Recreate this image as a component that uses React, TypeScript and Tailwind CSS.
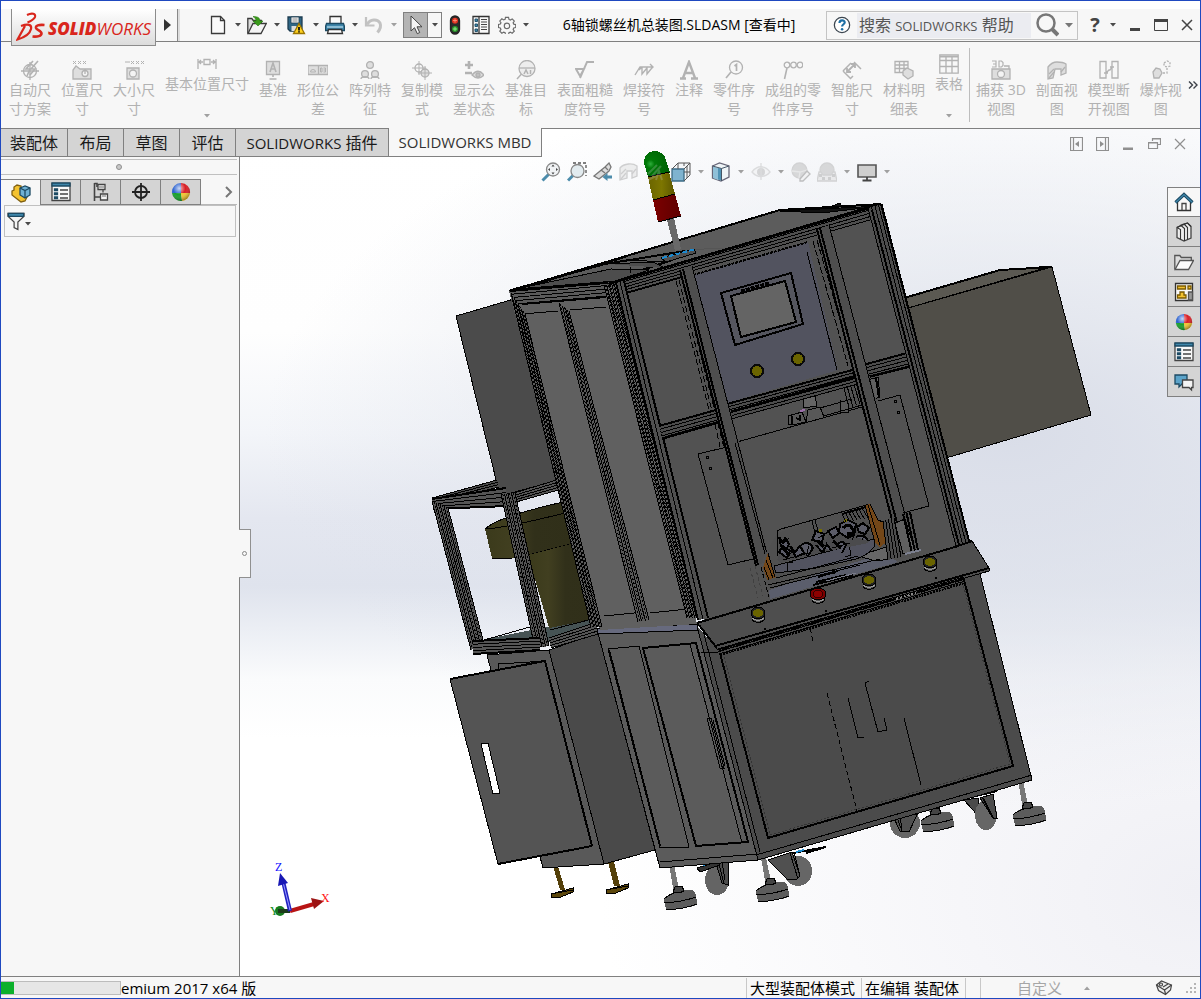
import React from "react";

type P = { children?: React.ReactNode };

/* ---------- small shared pieces ---------- */

const Caret = ({ light = false }: { light?: boolean }) => (
  <svg width="6" height="4" viewBox="0 0 6 4" className={light ? "text-[#a0a0a0]" : "text-[#4a4a4a]"}>
    <path d="M0 0h6L3 3.5z" fill="currentColor" />
  </svg>
);

const Ico = ({ children, size = 20 }: P & { size?: number }) => (
  <svg width={size} height={size} viewBox="0 0 20 20" fill="none" stroke="currentColor" strokeWidth="1.3" aria-hidden="true">
    {children}
  </svg>
);

/* ---------- quick access icons ---------- */

const NewIcon = () => (
  <Ico>
    <path d="M3.500 1.500h9l4 4v13h-13z" fill="#fafafa" stroke="#3a3a3a" />
    <path d="M12.500 1.500v4h4" stroke="#3a3a3a" />
  </Ico>
);
const OpenIcon = () => (
  <Ico>
    <path d="M.8 18.500v-15h4l1.500 2h8v3" fill="#ddd" stroke="#3a3a3a" />
    <path d="M1 18.500 6 8.500h13.300l-5.300 10z" fill="#f4f4f4" stroke="#3a3a3a" />
    <path d="M6 1.500c5 0 7 1.500 7 4.500h3l-5 5-5-5h3c0-2-1-3-3-4.500z" fill="#3a9a1c" stroke="#2a7a12" strokeWidth=".6" />
  </Ico>
);
const SaveIcon = () => (
  <Ico>
    <path d="M2 2h14v14H4l-2-2z" fill="#2f6685" stroke="#1d3c50" />
    <path d="M5 2h8v6H5z" fill="#f2f2f2" stroke="#1d3c50" strokeWidth=".8" />
    <path d="M6.500 4h5M6.500 6h5" stroke="#777" strokeWidth=".8" />
    <path d="M5.500 11h5v5h-5z" fill="#ddd" stroke="none" />
    <path d="m13 8.500 5.500 10h-11z" fill="#ffd21f" stroke="#9a7400" />
    <path d="M13 12v3.500M13 16.300v1.300" stroke="#111" strokeWidth="1.800" />
  </Ico>
);
const PrintIcon = () => (
  <Ico>
    <path d="M5 8V1.500h11V8" fill="#fafafa" stroke="#333" />
    <path d="M1.500 8.500h17l1 3v4h-19v-4z" fill="#3f87ab" stroke="#1c4a63" />
    <path d="M2 12h16" stroke="#b9dcec" />
    <path d="M3.500 14.500h13l1 4h-15z" fill="#fff" stroke="#333" />
  </Ico>
);
const UndoIcon = () => (
  <Ico>
    <path d="M2 2v8.500h8.500" stroke="#c2c2c2" strokeWidth="2.200" />
    <path d="M3 9.500C6 4 13.500 3.500 16 8c1.500 3.500 0 6.500-2.500 9.500" stroke="#c2c2c2" strokeWidth="3" />
  </Ico>
);
const CursorIcon = () => (
  <Ico>
    <path d="M5 1v15l3.500-3.300 2.800 6 2.400-1.200-2.700-5.700H16z" fill="#f4f4f4" stroke="#444" strokeWidth="1" />
  </Ico>
);
const TrafficIcon = () => (
  <Ico>
    <rect x="5.500" y="1" width="9" height="18" rx="4.500" fill="#2b2b2b" stroke="#222" />
    <circle cx="10" cy="5.700" r="3" fill="#e0301e" stroke="none" />
    <path d="M10 3.500v4M8 5.500h4" stroke="#ff9a80" strokeWidth=".8" />
    <circle cx="10" cy="14" r="3" fill="#2a9a2a" stroke="none" />
    <path d="M10 12v4M8 14h4" stroke="#a6f0a0" strokeWidth=".8" />
  </Ico>
);
const OptionsIcon = () => (
  <Ico>
    <path d="M2 1.500h16v17H2z" fill="#f8f8f8" stroke="#333" />
    <path d="M8 1.500v17" stroke="#333" />
    <path d="M4 4h2.500v2.500H4zM4 9h2.500v2.500H4zM4 14h2.500v2.500H4z" fill="#3f87ab" stroke="#1c4a63" strokeWidth=".9" />
    <path d="M10 4.500h6M10 7h6M10 9.500h6M10 12h6M10 14.500h6" stroke="#444" strokeWidth="1" />
  </Ico>
);
const GearIcon = () => (
  <Ico size={18}>
    <path
      d="M8.300 1.500h3.400l.5 2.300 1.600.7 2-1.300 2.300 2.400-1.300 2 .7 1.500 2.200.4v3.300l-2.200.5-.7 1.600 1.300 2-2.400 2.300-2-1.300-1.500.7-.5 2.100H8.300l-.4-2.100-1.600-.7-2 1.300L2 16.900l1.300-2-.7-1.600-2.100-.5V9.500L2.600 9l.7-1.500-1.300-2 2.300-2.400 2 1.300 1.600-.7z"
      stroke="#6a6a6a"
    />
    <circle cx="10" cy="11" r="3" stroke="#6a6a6a" />
  </Ico>
);
const HelpIcon = () => (
  <Ico size={18}>
    <circle cx="10" cy="10" r="8.500" fill="#fff" stroke="#3c4650" strokeWidth="1.400" />
    <path d="M7.200 7.800c0-3.800 5.800-3.800 5.800-.6 0 2-2.900 2-2.900 4.500" stroke="#1d6fa5" strokeWidth="2.400" />
    <circle cx="10.100" cy="14.700" r="1.400" fill="#1d6fa5" stroke="none" />
  </Ico>
);

/* ---------- ribbon ---------- */

const g = "#dedede";
const ribbonIcons: Record<string, React.ReactNode> = {
  auto: <><circle cx="10" cy="11" r="6.500" /><path d="M1 11h18M10 2v18" /><path d="M13 1 6 9h4l-3 7M18 1l-7 8h4l-5 6" strokeWidth="1.600" /></>,
  loc: <><path d="M1 1l3 3M4 1 1 4M6 1l3 3M9 1 6 4M11 1l3 3M14 1l-3 3" strokeWidth="1" /><path d="M1 10v9h18V9H8L4 6z" fill={g} /><circle cx="13" cy="13.500" r="3" fill="#f4f4f4" /><path d="M13 9v5" /></>,
  size: <><path d="M7 1l3 3M10 1 7 4M12 1l3 3M15 1l-3 3M17 1l3 3M20 1l-3 3M1 2h5" strokeWidth="1" /><path d="M3 8h12v11H3z" fill={g} /><circle cx="9" cy="13.500" r="3.500" fill="#f4f4f4" /></>,
  basic: <><path d="M1 5v10M19 5v10M1 8h5M14 8h5M4 6 2 8l2 2M16 6l2 2-2 2" /><path d="M7 5.500h6v5H7z" /></>,
  datum: <><path d="M3.500 1.500h13v13h-13z" fill={g} /><path d="M7 12l3-9 3 9M8 9h4M10 15v2M6.500 19h7" strokeWidth="1.600" /></>,
  tol: <><path d="M0 5.500h20v9H0zM10.500 5.500v9" fill={g} /><path d="M2.500 12h5a2.500 2.500 0 0 0-5 0M12.500 8h1.500v4h-1.500zM15.500 8h2v4h-2M15.500 10h2" strokeWidth="1" /></>,
  pattern: <><circle cx="10" cy="5" r="3.400" fill={g} /><circle cx="5" cy="14" r="3.400" fill={g} /><circle cx="15" cy="14" r="3.400" fill={g} /><path d="M1 19c0-3 8-3 8 0M11 19c0-3 8-3 8 0" /></>,
  copy: <><circle cx="7" cy="8" r="4" /><path d="M0 8h14M7 1v14" strokeWidth="1" /><circle cx="13" cy="13" r="4" fill={g} /><path d="M6 13h14M13 6v14" strokeWidth="1" /></>,
  show: <><path d="M5 1v8M1 5h8M1 13h7" strokeWidth="2.600" /><path d="M8 15c4-5 8-5 12 0-4 4-8 4-12 0z" fill={g} /><circle cx="14" cy="15" r="2" fill="#c0c0c0" /></>,
  target: <><circle cx="11" cy="8.500" r="8" fill="#ededed" /><path d="M3 8h16" /><path d="M5.500 14 1 19M8 14l2-4 2 4M14.500 10v4" strokeWidth="1.500" /></>,
  surf: <path d="M1 9h8L5 16zM5 18l7-16h7" strokeWidth="1.900" />,
  weld: <path d="M1 15 6 7h13M8 7v7l5-6v6l4-5M5 10l3-3M16 4l3 3-2 2" strokeWidth="1.400" />,
  note: <path d="M1 18.500h6M12 18.500h7M4 18 10 2l6 16M6 13h8" strokeWidth="2.400" />,
  balloon: <><circle cx="12" cy="7.500" r="6.500" /><path d="M7 12 2 18M10.500 6 12.500 4.500V11" strokeWidth="1.700" /></>,
  stacked: <><circle cx="4" cy="5" r="2.800" /><circle cx="10.500" cy="5" r="2.800" /><circle cx="17" cy="5" r="2.800" /><path d="M4 8 1.500 19" strokeWidth="1.600" /></>,
  smart: <><path d="M1 11 5 7l4-4M8 19l3-3M12 2l7 7M1 11l8 8" strokeWidth="1.500" /><path d="M5 12 13 4M5 8v4h4M9 4h4v4" strokeWidth="1.800" /></>,
  bom: <><path d="M1 1.500h13v11H1zM1 5h13M1 8.500h13M5.500 1.500v11M10 1.500v11" /><path d="M9 11l4-3 6 3v5l-5 3-5-4z" fill={g} /></>,
  table: <><path d="M.8.800h18.400v18.400H.800zM.8 6.500h18.400M.8 12.500h18.400M7 3v16M13 3v16" /><path d="M1 2.500h18" strokeWidth="2" /></>,
  cap: <><path d="M1 1h4v6H1M2 4h3M8 1v6h2.500l1.500-1.500v-3L10.500 1z" strokeWidth="1.200" /><path d="M1 9h18v10H1z" fill={g} /><circle cx="10" cy="14" r="3.500" fill="#f4f4f4" /><path d="M13 6h5v3" /></>,
  sect: <><path d="M1 7c3-4 6-5 9-5s6 0 9 2v9l-5 2V9H8l-2 9-5 1z" fill={g} /><path d="m2 14 5-5M2 18l5-6M14 12l4-5" /></>,
  brk: <path d="M1 1.500h6V18H1zM13 1.500h6V18h-6zM7 13l3-3h1l2-3M5 13h4M11 7h4" />,
  explode: <><path d="M2 12l3-4 4 1 2 4-3 5-5 0z" fill={g} /><path d="M13 3l3-2 3 1v4l-3 1-3-1zM16 8v5h-4" strokeDasharray="2 1.500" /></>,
};

const ribbonItems: [string, string[], boolean?][] = [
  ["auto", ["自动尺", "寸方案"]], ["loc", ["位置尺", "寸"]], ["size", ["大小尺", "寸"]],
  ["basic", ["基本位置尺寸"], true], ["datum", ["基准"]], ["tol", ["形位公", "差"]],
  ["pattern", ["阵列特", "征"]], ["copy", ["复制模", "式"]], ["show", ["显示公", "差状态"]],
  ["target", ["基准目", "标"]], ["surf", ["表面粗糙", "度符号"]], ["weld", ["焊接符", "号"]],
  ["note", ["注释"]], ["balloon", ["零件序", "号"]], ["stacked", ["成组的零", "件序号"]],
  ["smart", ["智能尺", "寸"]], ["bom", ["材料明", "细表"]], ["table", ["表格"], true],
];
const ribbonItems2: [string, string[], boolean?][] = [
  ["cap", ["捕获 3D", "视图"]], ["sect", ["剖面视", "图"]], ["brk", ["模型断", "开视图"]], ["explode", ["爆炸视", "图"]],
];

const RibbonButton = ({ item }: { item: [string, string[], boolean?] }) => {
  const [icon, lines, menu] = item;
  return (
    <button className={"flex h-full shrink-0 flex-col items-center px-[5px] text-[14px] leading-[19px] text-[#b2b2b2] " + (menu ? "pt-[12px] pb-2.5" : "pt-[18px]")}>
      <Ico>{ribbonIcons[icon]}</Ico>
      {lines.map((l, i) => (
        <span key={i} className="whitespace-nowrap">{l}</span>
      ))}
      {menu && <span className="mt-auto"><Caret light /></span>}
    </button>
  );
};

/* ---------- side panel and task pane icons ---------- */

const Ball = ({ size = 20 }: { size?: number }) => (
  <svg width={size} height={size} viewBox="0 0 20 20" aria-hidden="true">
    <defs>
      <radialGradient id="gloss" cx=".4" cy=".3" r=".7">
        <stop offset="0" stopColor="#fff" stopOpacity=".75" />
        <stop offset=".5" stopColor="#fff" stopOpacity="0" />
        <stop offset="1" stopColor="#000" stopOpacity=".35" />
      </radialGradient>
    </defs>
    <path d="M10 1a9 9 0 0 0-9 10l9 1z" fill="#2b62d0" />
    <path d="M10 1a9 9 0 0 1 9 10l-9 1z" fill="#d81f26" />
    <path d="M1 11a9 9 0 0 0 10 8l-1-8z" fill="#18a02c" />
    <path d="M19 11a9 9 0 0 1-8 8l-1-8z" fill="#f2c531" />
    <circle cx="10" cy="10" r="9" fill="url(#gloss)" />
  </svg>
);
const PartIcon = () => (
  <Ico>
    <path d="M1 8l2-1V4l3-2 4 1 1 8 5 3-2 4-4 1-9-7z" fill="#f3c22f" stroke="#806010" />
    <path d="M9 5l5-2 5 2v7l-5 3-5-3z" fill="#6fb1d4" stroke="#1c4a63" />
    <path d="M9 5l5 2.500L19 5M14 7.500V15" stroke="#1c4a63" />
  </Ico>
);
const PropsIcon = () => (
  <Ico>
    <path d="M1 1.500h18v17H1z" fill="#f8f8f8" stroke="#444" />
    <path d="M1 1h18v3H1z" fill="#3f87ab" stroke="#1c4a63" />
    <path d="M3.500 7h3v1.500h-3zM3.500 11h3v1.500h-3zM3.500 15h3v1.500h-3z" fill="#3f87ab" stroke="#1c4a63" />
    <path d="M9 8h8M9 12h8M9 16h8" stroke="#444" />
  </Ico>
);
const ConfigIcon = () => (
  <Ico>
    <path d="M3.500 1v18M3.500 1.500H6V5M3.500 15h6" stroke="#444" strokeWidth="1.600" />
    <path d="M7 2.500h7v5H7zM12 7.500v3M9.500 12h7v6h-7z" stroke="#444" fill="#f4f4f4" />
    <path d="M8 5h5M11 14h4" stroke="#999" />
  </Ico>
);
const CrossIcon = () => (
  <Ico>
    <circle cx="10" cy="10" r="6" stroke="#222" strokeWidth="1.800" />
    <path d="M1 10h18M10 1v18" stroke="#222" strokeWidth="1.800" />
  </Ico>
);
const FilterIcon = () => (
  <Ico>
    <path d="M1 2h17v3l-6.500 6v8l-4-2v-6L1 5z" fill="#f4f4f4" stroke="#444" />
    <path d="M1.500 2h16v3h-16z" fill="#3f87ab" stroke="#1c4a63" />
  </Ico>
);
const HomeIcon = () => (
  <Ico>
    <path d="M3.500 9v9.500h13V9L10 3z" fill="#f8f8f8" stroke="#333" />
    <path d="M8 18v-6.500h4V18" stroke="#444" />
    <path d="M1.500 10.500 10 2.500l8.500 8" stroke="#1c4a63" strokeWidth="3.200" />
    <path d="M1.800 10.200 10 2.500l8.200 7.700" stroke="#3f87ab" strokeWidth="1.200" />
  </Ico>
);
const LibIcon = () => (
  <Ico>
    <path d="M3 5.500v10l7 3.500 7-3V4.500L13.500 1z" fill="#eee" stroke="#444" />
    <path d="M3 5.500l4-2 3.500 3V19M6.500 17.500V7.500L3 5.500M6 3.500l4-1.500 3.500 3.500v12M10 2l3.500-1L17 4.500" stroke="#333" strokeWidth="1.100" />
  </Ico>
);
const FolderIcon = () => (
  <Ico>
    <path d="M.8 17V3.500h5l1.500 2h10v3" fill="#ddd" stroke="#555" />
    <path d="M1 17.500 6 8.500h13.500l-5 9z" fill="#fafafa" stroke="#555" />
  </Ico>
);
const PaletteIcon = () => (
  <Ico>
    <path d="M1.500 1.500h17v17h-17z" fill="#f8f8f8" stroke="#333" />
    <path d="M3.500 4h8v3h-8zM14 4h3v3h-3zM6 10h4v3h2v3H3.500v-3H6z" fill="#f3c22f" stroke="#7a5a00" />
    <path d="M14.500 10h4v8h-4z" fill="#999" stroke="#555" />
  </Ico>
);
const ForumIcon = () => (
  <Ico>
    <path d="M1 3h12v9H8l-3 3v-3H1z" fill="#5ba3c9" stroke="#1c4a63" />
    <path d="M8.500 8H19v7.500h-1.500v2.500L15 15.500H8.500z" fill="#f4f4f4" stroke="#444" />
  </Ico>
);

/* ---------- view toolbar icons ---------- */

const viewTools: { label: string; icon?: React.ReactNode; caret?: boolean }[] = [
  { label: "整屏显示全图", icon: <><path d="M8 12 1.500 18.500" stroke="#4c8cab" strokeWidth="3" /><circle cx="12" cy="7.500" r="6.500" fill="#f0f2f4" stroke="#888" /><path d="M12 2.500 10.500 4.500h3zM12 12.500l-1.500-2h3zM7 7.500l2-1.500v3zM17 7.500l-2-1.500v3z" fill="#444" stroke="none" /></> },
  { label: "局部放大", icon: <><path d="M6 13.500 1 18.500" stroke="#4c8cab" strokeWidth="3" /><path d="M6 1h13v13" strokeDasharray="3 2" stroke="#555" /><circle cx="10.500" cy="9" r="6.500" fill="#e2ebef" stroke="#888" /></> },
  { label: "上一视图", icon: <><path d="M1 14 12 5l4-4 2 4-2 4-10 8z" fill="#dcdcdc" stroke="#777" /><path d="m8 8 4 3M12 5l3 3" stroke="#777" /><path d="m9.500 15 5-4v2.500h4.500v3h-4.500V19z" fill="#4c8cab" stroke="none" /></> },
  { label: "剖面视图", icon: <g opacity=".45"><path d="M1 6c4-5 13-5 17-2v10l-5 2V9H8v7l-7 2z" fill="#ddd" stroke="#999" /><path d="m2 12 5-5M2 17l5-6M13 12l4-5" stroke="#999" /></g> },
  { label: "动态注解视图", icon: <g opacity=".25" stroke="#cfcfcf"><path d="m3 12 9-9M7 14l9-10M11 18l3-9 3 9M3 18l8-4" strokeWidth="2" /></g> },
  { label: "视图定向", icon: <><path d="M7 1h12v12l-6 6V7H1z" fill="#f4f6f8" stroke="none" /><path d="M1 7h12v12H1z" fill="#7fb3cf" stroke="#3c6c86" /><path d="M1 7 7 1h12v12l-6 6M13 7l6-6M7 1v6M13 1v3M16 4v12M13 10h6" stroke="#555" strokeWidth="1" /></>, caret: true },
  { label: "显示样式", icon: <><path d="m1.500 4 7-3 9.500 3v11l-8 4-8.500-3z" fill="#eef4f7" stroke="#667" /><path d="M2 4.500l5 1.500v12l-5-2z" fill="#8fc0d8" stroke="none" /><path d="M7 6l3.500.500V18.500L7 17.500z" fill="#4f93b5" stroke="none" /><path d="M1.500 4 10.500 6.500 18 4M10.500 6.500V19" stroke="#456" strokeWidth="1" /></>, caret: true },
  { label: "隐藏/显示项目", icon: <g opacity=".35"><path d="M1 10c5-7 13-7 18 0-5 6-13 6-18 0z" fill="#eee" stroke="#aaa" /><circle cx="10" cy="10" r="4" fill="#999" stroke="none" /><path d="M10 1v17" stroke="#aaa" /></g>, caret: true },
  { label: "编辑外观", icon: <g opacity=".6"><circle cx="8.500" cy="8.500" r="7.500" fill="#c4c4c4" stroke="#bbb" /><path d="m1 9 8 1 7-2M9 10l-1 6" stroke="#ddd" /><path d="m9 17 7-8 3 3-7 7H9z" fill="#f0f0f0" stroke="#999" /></g> },
  { label: "应用布景", icon: <g opacity=".6"><circle cx="10" cy="8" r="7" fill="#c4c4c4" stroke="#bbb" /><path d="M2 10h2l2 3h8l2-3h2l2 9H0z" fill="#e2e2e2" stroke="#bbb" /><path d="M2 12h3v3H2zM15 12h3v3h-3zM5 15h3v3H5zM11 15h3v3h-3z" fill="#b4b4b4" stroke="none" /></g>, caret: true },
  { label: "视图设置", icon: <><path d="M1 3h18v12H1z" fill="#cfcfcf" stroke="#555" strokeWidth="1.600" /><path d="M10 15v3M5.500 18.500h9" stroke="#444" strokeWidth="1.800" /></>, caret: true },
];

/* ---------- 3D model drawing ---------- */

const lerp = (a: number, b: number, t: number) => a + (b - a) * t;

/* A fan of n lines running from segment (a → b) to segment (c → d). */
const Bundle = ({ q, n, w = 1, dash }: { q: number[]; n: number; w?: number; dash?: string }) => (
  <g stroke="#000" strokeWidth={w} strokeDasharray={dash}>
    {Array.from({ length: n }, (_, i) => {
      const t = n === 1 ? 0 : i / (n - 1);
      return (
        <line key={i} x1={lerp(q[0], q[2], t)} y1={lerp(q[1], q[3], t)} x2={lerp(q[4], q[6], t)} y2={lerp(q[5], q[7], t)} />
      );
    })}
  </g>
);

/* An aluminium profile: filled body, ribbed with lines, with a heavier outer edge. */
const Rail = ({ q, n, fill = "#4c4c4c", mesh = false, bold = false }: { q: number[]; n: number; fill?: string; mesh?: boolean; bold?: boolean }) => (
  <g>
    <polygon points={[q[0], q[1], q[2], q[3], q[6], q[7], q[4], q[5]].join(" ")} fill={fill} />
    <Bundle q={q} n={n} />
    {mesh && <Bundle q={q} n={n * 2 - 1} dash="2 2" />}
    {bold && <Bundle q={q} n={2} w={2} />}
  </g>
);

const Foot = ({ x, y, top }: { x: number; y: number; top: number }) => (
  <g>
    <path d={`M${x - 11} ${top}h5l6 ${y - top - 6}h-6z`} fill="#777" />
    <path d={`M${x - 16} ${y - 1}q5-6 14-8 13-3 17 1l2 9v4q-12 4-31 5z`} fill="#5c5c5c" />
    <path d={`M${x - 16} ${y - 1}q5-5 14-7M${x - 14} ${y + 10}q18-1 31-6`} stroke="#000" fill="none" />
    <path d={`M${x - 16} ${y + 3}q18-1 32-6`} stroke="#000" fill="none" />
    <path d={`M${x - 7} ${y - 8}l2-5 7-1 2 5-5 2z`} fill="#444" stroke="#000" />
  </g>
);

const PushButton = ({ x, y, red = false }: { x: number; y: number; red?: boolean }) => (
  <g>
    <path d={`M${x - 6} ${y}v7q6 5 12 0v-7`} fill="#555" stroke="#000" />
    <path d={`M${x - 6} ${y + 5}q6 5 12 0`} fill="none" stroke="#999" />
    <ellipse cx={x} cy={y} rx={red ? 8 : 7} ry="6" fill={red ? "#7c0000" : "#222"} stroke="#000" />
    <ellipse cx={x} cy={y} rx="5" ry="4" fill={red ? "#8c0000" : "#6a6400"} stroke={red ? "#300" : "none"} />
  </g>
);

const Machine = () => (
  <svg
    width="1199" height="848" viewBox="1 128 1199 848" fill="none" shapeRendering="crispEdges"
    className="pointer-events-none absolute left-0 top-0 max-w-none" role="img" aria-label="6轴锁螺丝机总装图"
  >
    <defs>
      <linearGradient id="olive" x1="0" x2="1">
        <stop offset="0" stopColor="#3b3a1b" /><stop offset=".3" stopColor="#413f20" /><stop offset=".55" stopColor="#31301a" /><stop offset="1" stopColor="#302f19" />
      </linearGradient>
      <radialGradient id="dome" cx=".25" cy=".5" r=".8">
        <stop offset="0" stopColor="#2fae3c" /><stop offset=".2" stopColor="#007a08" /><stop offset="1" stopColor="#005c05" />
      </radialGradient>
      <linearGradient id="lampY" x1="0" x2="1"><stop offset="0" stopColor="#6a6400" /><stop offset=".5" stopColor="#7d7600" /><stop offset="1" stopColor="#5c5600" /></linearGradient>
      <linearGradient id="lampR" x1="0" x2="1"><stop offset="0" stopColor="#7c0000" /><stop offset="1" stopColor="#5e0000" /></linearGradient>
    </defs>

    {/* side boxes */}
    <polygon points="456,316 514,299 566,478 500,496" fill="#4b4b4b" stroke="#000" />
    <polygon points="904,298 1000,270 1052,266 908,308" fill="#5b5952" stroke="#000" />
    <path d="M904 298 1000 270 1052 267" stroke="#000" strokeWidth="2" />
    <polygon points="908,308 1052,267 1091,415 946,458" fill="#504e48" stroke="#000" />

    {/* feet and castors */}
    <path d="M553 866h5l7 24h-5zM608 862h6l6 24h-6z" fill="#54400a" />
    <path d="M551 894l22-6v4l-12 5-10 1zM606 890l22-6v4l-12 5-10 1z" fill="#5c470c" stroke="#000" />
    <path d="M551 894l22-4M606 890l22-4" stroke="#000" />
    <ellipse cx="717" cy="880" rx="12" ry="15" fill="#646464" />
    <path d="M716 863l12-2v24l-6-2z" fill="#4c4c4c" stroke="#000" />
    <path d="M719 864l5 20M722 862l3 18" stroke="#000" />
    <path d="M697 868l20-6 3 3-20 7z" fill="#333" stroke="#000" />
    <path d="M703 865l15-4" stroke="#1c8ad0" strokeWidth="2" />
    <ellipse cx="798" cy="871" rx="14" ry="15" fill="#666" />
    <path d="M768 860l24-8 8 24-4 4-9-1z" fill="#505050" stroke="#000" />
    <path d="M790 853l8 26M794 852l6 24" stroke="#000" />
    <path d="M793 853l33-6M806 853l20-6" stroke="#000" strokeWidth="2" />
    <path d="M796 852l8-2" stroke="#1c8ad0" strokeWidth="2" />
    <ellipse cx="905" cy="823" rx="15" ry="15" fill="#666" />
    <path d="M893 816l27-8-11 24-9-1z" fill="#505050" stroke="#000" />
    <path d="M896 815l6 16M900 815l2 16" stroke="#000" />
    <path d="M964 800l14-2 2 20z" fill="#4a4a4a" stroke="#000" />
    <ellipse cx="986" cy="815" rx="11" ry="15" fill="#666" />
    <path d="M980 798l13-4 4 24-4 0z" fill="#4c4c4c" stroke="#000" />
    <path d="M983 798l10 20M955 801l42-10" stroke="#000" strokeWidth="2" />
    <Foot x={680} y={900} top={864} />
    <Foot x={772} y={892} top={858} />
    <Foot x={937} y={822} top={802} />
    <Foot x={1029} y={816} top={780} />

    {/* hopper cylinder behind the side frame */}
    <path d="M485 529q12-12 78-27l12 41-62 15q-14 3-21 0z" fill="url(#olive)" />
    <path d="M485 529q12-12 78-27M485 529q20-1 80-16M528 555l47-12M492 559l20-1" stroke="#000" />
    <polygon points="481,640 598,617 600,626 545,643" fill="#465354" />
    <path d="M528 555l47-12 21 76-47 9z" fill="url(#olive)" />
    <path d="M484 640l46-13M550 630l46-12" stroke="#000" />

    {/* lower left cabinet */}
    <polygon points="487,655 549,650 604,864 543,868" fill="#595959" stroke="#000" />
    <polygon points="549,650 598,633 655,850 604,864" fill="#4a4a4a" stroke="#000" />
    <path d="M498 664v6l48-10M498 664l48-3" stroke="#000" />
    <path fillRule="evenodd" d="M450 679 545 661 592 846 498 864zM481 744l12 50 7-1-12-50z" fill="#545454" stroke="#000" />
    <path d="M450 679 545 661 592 846M498 864l94-18" stroke="#000" strokeWidth="2" />

    {/* side frame */}
    <Rail q={[432, 498, 434, 503, 497, 480, 499, 487]} n={4} />
    <Rail q={[432, 499, 433, 509, 506, 488, 508, 506]} n={5} fill="#555" bold />
    <Rail q={[514, 493, 516, 502, 560, 479, 562, 489]} n={5} fill="#555" />
    <Rail q={[432, 501, 448, 508, 471, 650, 483, 640]} n={5} fill="#555" mesh />
    <Rail q={[501, 494, 515, 493, 535, 648, 549, 646]} n={5} fill="#555" mesh />
    <Rail q={[473, 641, 473, 654, 540, 638, 540, 650]} n={5} fill="#555" bold />
    <Rail q={[549, 638, 551, 648, 597, 622, 598, 634]} n={5} fill="#555" />

    {/* lower middle cabinet */}
    <polygon points="598,633 697,626 758,860 660,868" fill="#5b5b5b" stroke="#000" />
    <polygon points="597,629 697,624 698,630 598,634" fill="#676a7e" stroke="#000" />
    <path d="M608 649l31-3 50 201-29 1z" stroke="#000" />
    <path d="M609 650l51 196M643 648l53-5 52 199-52 4z" stroke="#000" strokeWidth="2" />
    <path d="M660 862l98-8M690 644l52 199" stroke="#000" />
    <path d="M707 718h4l13 50h-4zM713 720l12 46" stroke="#000" />

    {/* lower front cabinet */}
    <polygon points="697,626 718,650 980,572 1032,780 758,860" fill="#4b4b4b" />
    <path d="M697 626l61 234 274-80-52-206M756 855l276-80M703 630l57 222" stroke="#000" />
    <path d="M720 653l48 185 245-72-49-186" stroke="#000" strokeWidth="2" />
    <path d="M723 653l47 182 240-71-48-184" stroke="#333" strokeDasharray="2 2" />
    <path d="M827 693l30 118M810 628l3 13" stroke="#000" strokeDasharray="5 3" />
    <path d="M848 698l10 40 6-1M869 681l-4 2 13 49 9-2-3-12M904 718l17 67" stroke="#000" />

    {/* upper front face */}
    <polygon points="612,283 881,204 971,545 705,622" fill="#525252" />
    <polygon points="509,291 780,210 881,204 615,284" fill="#5c5c5c" />
    <path d="M509 291 780 210 881 204" stroke="#000" strokeWidth="2" />
    <path d="M780 211l101-5-60 7zM832 206l8-3 2 4z" fill="#111" stroke="#000" />
    <path d="M511 290l94-26 80-13M513 291l115-35M540 288l66-16M606 282l66-22" stroke="#000" strokeWidth="2" />
    <path d="M516 289l95-20 38 1-34 11zM608 264l45-2 12 6M628 260l38 2M630 267v6" fill="#4d4d4d" stroke="#000" />
    <path d="M693 250l22-2 26 2" stroke="#555" />
    <Rail q={[606, 284, 614, 293, 878, 204, 884, 216]} n={5} fill="#4f4f4f" />
    <path d="M609 284 880 205" stroke="#000" strokeWidth="2" />

    {/* upper left glazing */}
    <polygon points="509,291 606,282 697,624 600,630" fill="#606060" />
    <Rail q={[510, 291, 516, 304, 606, 282, 608, 296]} n={5} fill="#5a5a5a" />
    <path d="M510 291l96-8M522 304l84-7" stroke="#000" strokeWidth="2" />
    <path d="M522 314l36-3M570 310l36-3M604 616l40-4M650 613l38-4" stroke="#000" />
    <Rail q={[511, 293, 525, 314, 591, 627, 602, 627]} n={5} fill="#5a5a5a" mesh />
    <Rail q={[559, 303, 569, 311, 638, 622, 649, 620]} n={4} fill="#5a5a5a" mesh />
    <Rail q={[604, 285, 617, 284, 687, 618, 700, 618]} n={6} fill="#606060" mesh />
    <Rail q={[616, 283, 624, 281, 698, 620, 708, 618]} n={3} fill="#505050" bold />

    {/* window areas and cross rails */}
    <path d="M626 293l56-16" stroke="#000" strokeWidth="2" />
    <Bundle q={[676, 281, 682, 279, 709, 410, 714, 408]} n={3} dash="6 3" />
    <Rail q={[659, 426, 663, 439, 716, 410, 719, 423]} n={5} />
    <path d="M659 426l57-16M663 438l55-16" stroke="#000" strokeWidth="2" />
    <Bundle q={[715, 424, 721, 423, 720, 447, 727, 445]} n={3} dash="6 3" />
    <polygon points="693,275 808,242 838,370 727,403" fill="#52535f" />
    <path d="M693 275l115-33" stroke="#000" strokeWidth="2" strokeDasharray="3 1" />
    <path d="M693 275l34 128M807 252l30 118" stroke="#000" />
    <Bundle q={[813, 241, 817, 240, 848, 366, 853, 365]} n={2} dash="7 2" />
    <Rail q={[727, 404, 731, 419, 856, 369, 861, 383]} n={6} />
    <path d="M727 404l129-35M729 412l129-36" stroke="#000" strokeWidth="2" />
    <Rail q={[863, 365, 867, 378, 907, 353, 911, 367]} n={5} />
    <path d="M863 365l44-12M867 377l44-11" stroke="#000" strokeWidth="2" />
    <path d="M721 293l70-20 12 51-68 21z" stroke="#000" strokeWidth="2" fill="#55565f" />
    <path d="M731 296l54-15 11 41-55 15z" fill="#646464" stroke="#000" strokeWidth="2" />
    <path d="M741 291l28-8" stroke="#000" strokeWidth="3" strokeDasharray="4 1" />
    <circle cx="757" cy="371" r="7" fill="#0a0a0a" /><circle cx="757" cy="371" r="5" fill="#6a6400" />
    <circle cx="798" cy="359" r="7" fill="#0a0a0a" /><circle cx="798" cy="359" r="5" fill="#6a6400" />

    {/* spindle head */}
    <path d="M737 442l125-35" stroke="#000" />
    <path d="M803 399l12-3 2 10-13 2z" stroke="#000" fill="#646464" />
    <path d="M788 424v-8l14-4 4 10-14 3zM806 422l2-12 12-3 4 10M820 408l32-9M824 416l38-11M840 400v12h8v-9" stroke="#000" fill="#585858" />
    <path d="M792 416v8M796 418l4 2v-5" stroke="#000" strokeWidth="2" />
    <Bundle q={[844, 388, 854, 385, 849, 408, 860, 404]} n={4} />
    <path d="M800 411l5-1" stroke="#9a6fa8" strokeWidth="2" />
    <path d="M868 380l10-3 2 20-9 3z" fill="#606060" stroke="#000" />
    <path d="M876 378l3 20" stroke="#000" strokeWidth="2" />

    {/* posts */}
    <polygon points="680,270 692,266 770,560 757,566" fill="#4e4e4e" />
    <Bundle q={[680, 270, 683, 269, 756, 566, 758, 565]} n={2} w={2} />
    <path d="M692 266l76 292" stroke="#000" />
    <polygon points="817,229 829,225 909,523 895,528" fill="#4e4e4e" />
    <Bundle q={[817, 229, 820, 228, 893, 524, 897, 523]} n={2} w={2} />
    <path d="M829 225l76 290" stroke="#000" />
    <Rail q={[868, 208, 882, 204, 956, 546, 969, 541]} n={5} fill="#4c4c4c" />
    <path d="M881 204l88 337M872 210l87 335" stroke="#000" strokeWidth="2" />

    {/* guard plates */}
    <path d="M757 558l-29 7-30-111 29-7M878 401l22-6 29 111-26 7M735 443l33 122" stroke="#000" />
    <path d="M706 456h2v2h-2zM709 467h2v2h-2zM894 400h2v2h-2zM897 411h2v2h-2z" stroke="#000" />

    {/* work bay */}
    <path d="M777 533l93-29 19 40 32 9-150 46-8-40z" fill="#505050" />
    <path d="M777 556v-23q0-3 4-4l89-25" stroke="#000" />
    <path d="M812 521l4 16M815 520l4 14" stroke="#000" />
    <polygon points="769,590 884,553 898,562 770,599" fill="#5b5e6c" />
    <path d="M858 556l28-9 4 12-14 2z" fill="#666" stroke="#000" />
    <path d="M774 566l100-27v8q-6 8-18 12l-40 9-40 5z" fill="#52535f" stroke="#000" />
    <path d="M776 578l82-22M768 585l112-26M770 588l54-14M793 562l-6 1v9M849 544l2 11-6 2M820 575l40-10" stroke="#000" />
    <path d="M813 585l40-10M818 577l20-6M816 582l30-7M834 570v4" stroke="#000" strokeWidth="2" />
    <path d="M826 581l30-8" stroke="#7a7c8a" />
    <path d="M777 560l4-10 8-4 6 3 6-3 8 4 4-8 8-4 5 2 4-8 12-4 10 3 4-6 10 2 5 8-3 8-40 8-48 12z" fill="#4b4b4d" />
    <path d="M779 537l4 6 2-5 4 6-3 6-5-4zM779 552l4-6 7 5-3 7zM790 546l5 6 5-6 4 7-8 4zM801 545q8-5 12 3l-5 8M812 540l4-9 8 3-2 8zM816 545l6 7 5-7 5 6M828 531l8-4 3 6-6 5zM836 545q6-6 10 0l-4 8M840 524l8-4 8 4-2 10-8 3-7-5zM857 527l6-4 6 5-4 6-6-2zM856 537q8-4 12 4" stroke="#000" strokeWidth="2" fill="#5b5c68" />
    <path d="M783 560l26-7M788 557l6-8M806 556l3-10M824 552l3-10M832 548l18-5M862 540l6-12M781 545l8-7M818 538l12-7M852 540l4-9" stroke="#000" />
    <path d="M843 528q5-6 9 0t-5 6M818 541l6 6M783 548l5 6M833 541l8 7M847 538l8-4" stroke="#000" strokeWidth="3" />
    <path d="M819 530h3M844 520h3" stroke="#777000" strokeWidth="3" />
    <Bundle q={[842, 514, 862, 508, 846, 522, 868, 518]} n={7} />
    <path d="M842 514l24-7" stroke="#000" strokeWidth="2" />
    <polygon points="763,567 768,553 776,577 767,580" fill="#744718" />
    <path d="M768 553l7 24M764 567l5 13M766 560l7 18" stroke="#000" />
    <polygon points="865,505 870,504 878,520 883,522 887,542 880,547 875,543" fill="#744718" />
    <path d="M865 505l10 38M868 505l12 40M870 504l8 16 5 2 4 20" stroke="#000" />
    <Rail q={[883, 521, 894, 518, 888, 560, 901, 557]} n={5} />
    <path d="M895 523l10-4 10 32-12 3z" fill="#606060" stroke="#000" />
    <Bundle q={[903, 514, 910, 512, 912, 553, 918, 550]} n={3} w={2} />
    <path d="M905 554l16-4" stroke="#7c8090" strokeWidth="2" />
    <path d="M750 568l8 30M755 566l8 30" stroke="#404040" strokeDasharray="3 3" />
    <path d="M761 567l8 30" stroke="#000" strokeDasharray="5 2" />

    {/* console shelf */}
    <polygon points="697,623 955,547 972,541 989,568 989,571 718,650" fill="#4e4e4e" stroke="#000" />
    <path d="M697 623 955 547 972 541M715 646 989 568M699 625l17 22" stroke="#000" strokeWidth="2" />
    <Bundle q={[718, 649, 719, 654, 964, 577, 965, 581]} n={3} />
    <Bundle q={[719, 651, 720, 655, 964, 579, 965, 583]} n={2} w={2} dash="2 1" />
    <path d="M896 599l20-6" stroke="#888" strokeWidth="2" strokeDasharray="2 2" />
    <path d="M701 652h17" stroke="#000" />
    <path d="M764 629h2M825 611h2M935 578h2" stroke="#000" strokeWidth="2" />
    <PushButton x={758} y={613} />
    <PushButton x={818} y={594} red />
    <PushButton x={869} y={580} />
    <PushButton x={930} y={562} />

    {/* signal tower */}
    <path d="M661 258l33-9 2 4-30 9z" fill="#505050" stroke="#000" />
    <path d="M662 258l34-9" stroke="#1c8ad0" strokeWidth="2" strokeDasharray="5 2" />
    <path d="M667 220l7-2 7 31-6 2z" fill="#696969" />
    <path d="M648 177l-4-14c-1-15 19-16 22-3l4 13z" fill="url(#dome)" />
    <path d="M648 177l21-5 6 22-22 6z" fill="url(#lampY)" />
    <path d="M653 200l22-6 6 22-23 6z" fill="url(#lampR)" />
    <path d="M648 177l21-5M653 200l22-6M658 222l23-6" stroke="#000" />

    {/* orientation triad */}
    <g shapeRendering="auto">
      <circle cx="280" cy="911" r="5" fill="#167a1e" />
      <path d="M278 909h12v4h-12z" fill="#1c3b1a" />
      <path d="M290 911l24-7" stroke="#b81414" strokeWidth="4" />
      <path d="M311 898l13 3-10 8z" fill="#9c1414" />
      <path d="M290 911l-7-30" stroke="#2020c0" strokeWidth="4" />
      <path d="M290 910l-7-28" stroke="#9a9aff" strokeWidth="1" />
      <path d="M280 873l8 10-10 3z" fill="#1818b4" />
    </g>
    <g fontFamily="'Liberation Serif', serif" fontSize="12" stroke="none">
      <text x="275" y="871" fill="#1414ff">Z</text>
      <text x="321" y="902" fill="#ff1414">X</text>
      <text x="270" y="915" fill="#0a8a14">Y</text>
    </g>
  </svg>
);

/* ---------- page ---------- */

const quick: [string, React.ReactNode][] = [
  ["新建", <NewIcon />], ["打开", <OpenIcon />], ["保存", <SaveIcon />], ["打印", <PrintIcon />], ["撤消", <UndoIcon />],
];
const panelTabs: [string, React.ReactNode][] = [
  ["设计树", <PartIcon />], ["属性", <PropsIcon />], ["配置", <ConfigIcon />], ["标注专家", <CrossIcon />], ["外观", <Ball />],
];
const taskTabs: [string, React.ReactNode][] = [
  ["资源", <HomeIcon />], ["设计库", <LibIcon />], ["文件探索器", <FolderIcon />], ["视图调色板", <PaletteIcon />],
  ["外观、布景和贴图", <Ball size={18} />], ["自定义属性", <PropsIcon />], ["论坛", <ForumIcon />],
];

export default function App() {
  return (
    <div className="flex h-screen min-h-[640px] flex-col overflow-hidden border border-[#1f49c0] bg-[#f7f7f7] font-['Open_Sans','Noto_Sans_CJK_SC',sans-serif] text-[14px] text-black">
      {/* title bar */}
      <header className="shrink-0 border-b border-[#808080] bg-white pt-2">
        <div className="flex h-8 items-center bg-[#f7f7f7]">
          <div className="relative z-10 ml-2.5 flex h-[37px] w-[145px] shrink-0 items-center self-start border border-t-0 border-[#8c8c8c] bg-linear-to-b from-white to-[#dcdcdc] pl-1 text-[#d9261c]">
            <svg width="30" height="32" viewBox="0 0 30 32" fill="none" stroke="currentColor" strokeWidth="2.200" aria-hidden="true" className="shrink-0">
              <path d="M11 4c5-2.500 9-1.500 8 2-.8 2.500-4 4-7.500 5.500" />
              <path d="M5 15c7-2.500 11-1.500 10 3-1 4.500-7 8.500-13.500 10.500L9 15" />
              <path d="M28.500 14c-6-.5-9 .5-8.500 3 .5 2 5.500 2.500 5.500 5.500 0 2.500-4 3.500-9 3" strokeWidth="2.600" />
            </svg>
            <span className="mt-1 ml-0.5 text-[17px] leading-5 italic"><b className="font-extrabold">SOLID</b>WORKS</span>
          </div>
          <button aria-label="展开菜单" className="flex h-8 w-[18px] shrink-0 items-center justify-center pl-1">
            <svg width="7" height="12" viewBox="0 0 7 12"><path d="M0 0v12l7-6z" fill="#333" /></svg>
          </button>
          <div className="ml-[3px] h-8 w-[3px] shrink-0 border-l border-[#888] bg-[#ddd]" />
          <div className="ml-7 flex shrink-0 items-center">
            {quick.map(([label, icon]) => (
              <React.Fragment key={label}>
                <button aria-label={label} className="flex h-7 w-5 items-center justify-center">{icon}</button>
                <button aria-label={label + "选项"} className="flex h-7 w-[19px] items-center justify-center"><Caret light={label === "撤消"} /></button>
              </React.Fragment>
            ))}
          </div>
          <div className="flex h-[26px] w-[39px] shrink-0 border border-[#808080]">
            <button aria-label="选择" className="flex w-6 items-center justify-center border-r border-[#808080] bg-[#b4b4b4]"><CursorIcon /></button>
            <button aria-label="选择选项" className="flex flex-1 items-center justify-center"><Caret /></button>
          </div>
          <button aria-label="重建模型" className="flex w-[26px] justify-center"><TrafficIcon /></button>
          <button aria-label="文件属性" className="flex w-[26px] justify-center"><OptionsIcon /></button>
          <button aria-label="选项" className="flex w-[26px] justify-center"><GearIcon /></button>
          <button aria-label="选项菜单" className="flex w-3 justify-center"><Caret /></button>
          <h1 className="min-w-0 flex-1 truncate text-center text-[14px] leading-5">6轴锁螺丝机总装图.SLDASM [查看中]</h1>
          <div className="flex h-[29px] w-[252px] shrink-0 items-center border border-[#c4c4c4]">
            <span className="flex w-[30px] justify-center"><HelpIcon /></span>
            <label className="grid h-[25px] w-[174px] items-center bg-[#ebecf1]">
              <input aria-label="搜索 SOLIDWORKS 帮助" placeholder=" " className="peer col-start-1 row-start-1 h-full w-full bg-transparent px-0.5 text-[14px] text-[#444] outline-none" />
              <span aria-hidden="true" className="pointer-events-none col-start-1 row-start-1 px-0.5 text-[16px] leading-6 whitespace-nowrap text-[#555] peer-[:not(:placeholder-shown)]:hidden">
                搜索 <span className="text-[13px]">SOLIDWORKS</span> 帮助
              </span>
            </label>
            <button aria-label="搜索" className="flex w-8 justify-center">
              <svg width="24" height="24" viewBox="0 0 24 24" fill="none" stroke="#777"><circle cx="11" cy="10" r="8.500" strokeWidth="2.500" /><path d="m17 16 6 6" strokeWidth="4" /></svg>
            </button>
            <button aria-label="搜索范围" className="flex w-3 justify-center text-[#777]">
              <svg width="8" height="5" viewBox="0 0 8 5"><path d="M0 0h8L4 4.500z" fill="currentColor" /></svg>
            </button>
          </div>
          <button aria-label="帮助" className="ml-2 w-[18px] text-[20px] leading-6 font-bold text-[#444]">?</button>
          <button aria-label="帮助菜单" className="flex w-[18px] justify-center"><Caret /></button>
          <div className="flex shrink-0 text-[#444]">
            <button aria-label="最小化" className="flex w-[26px] items-end justify-center"><svg width="10" height="3"><path d="M0 0h10v3H0z" fill="currentColor" /></svg></button>
            <button aria-label="最大化" className="flex w-[26px] justify-center"><svg width="14" height="12" fill="none" stroke="currentColor"><path d="M.5 1.500h13v10H.5z" /><path d="M0 1.500h14" strokeWidth="3" /></svg></button>
            <button aria-label="关闭" className="flex w-[26px] justify-center"><svg width="12" height="12" stroke="currentColor" strokeWidth="1.500"><path d="m1 1 10 10M11 1 1 11" /></svg></button>
          </div>
        </div>
      </header>

      {/* ribbon */}
      <nav className="flex h-[86px] shrink-0 overflow-hidden pl-[3px]">
        {ribbonItems.map((it) => <RibbonButton key={it[0]} item={it} />)}
        <div className="my-1.5 mr-px ml-px w-px shrink-0 bg-[#bdbdbd]" />
        {ribbonItems2.map((it) => <RibbonButton key={it[0]} item={it} />)}
        <button aria-label="更多" className="flex min-w-0 flex-1 items-center justify-center">
          <svg width="10" height="8" viewBox="0 0 10 8" fill="none" stroke="#3c4048" strokeWidth="1.400"><path d="m1 .5 3.500 3.500L1 7.500M5.500.500 9 4 5.500 7.500" /></svg>
        </button>
      </nav>

      <main className="relative flex min-h-0 flex-1 flex-col bg-[radial-gradient(ellipse_62%_44%_at_84%_36%,#d9dde8_0%,#dfe3ecaa_45%,#ffffff00_100%),radial-gradient(ellipse_50%_50%_at_100%_90%,#f0f0f5_0%,#ffffff00_100%),linear-gradient(180deg,#ffffff_0%,#fefefe_24%,#f3f5f9_36%,#e4e7f0_46%,#dfe3ed_54%,#ebeef4_59%,#fafbfc_65%,#ffffff_72%)]">
        <Machine />

        <div className="relative flex h-[29px] shrink-0 text-[16px] leading-7">
          {["装配体", "布局", "草图", "评估"].map((t, i) => (
            <button key={t} className={"border-t border-r border-b border-[#808080] bg-[#d4d4d4] whitespace-nowrap text-[#1a1a1a] " + (i === 0 ? "w-[67px]" : "w-14")}>{t}</button>
          ))}
          <button className="w-[153px] border-t border-r border-b border-[#808080] bg-[#d4d4d4] whitespace-nowrap text-[#1a1a1a]">
            <span className="text-[15px]">SOLIDWORKS</span> 插件
          </button>
          <button className="w-[153px] border-r border-b border-[#808080] bg-[#f7f7f7] text-[15px] whitespace-nowrap text-[#333]">SOLIDWORKS MBD</button>
          <div className="flex flex-1 items-center justify-end border-t border-[#808080] pt-0.5 pr-[7px] text-[#8f8f8f]">
            {([
              ["左平铺", "M.5.500h12v13H.500z", "M3.500 0v14", "M9 4v6L5 7z"],
              ["右平铺", "M.5.500h12v13H.500z", "M9.500 0v14", "M4 4v6l4-3z"],
              ["最小化文档", "", "", "M1 10.500h10v2.500H1z"],
              ["还原文档", "M4.500 4V1.500h8v6H10", "M.5 5.500h9v6h-9z", "M4 1h9v1.500H4zM0 5h10v1.500H0z"],
              ["关闭文档", "m1 2 10 10M11 2 1 12", "", ""],
            ] as const).map(([l, a, b, f]) => (
              <button key={l} aria-label={l} className="flex w-[26px] justify-center">
                <svg width="13" height="14" fill="none" stroke="currentColor" strokeWidth="1.200"><path d={a + b} /><path d={f} fill="currentColor" stroke="none" /></svg>
              </button>
            ))}
          </div>
        </div>

        <div className="relative flex min-h-0 flex-1">
          {/* feature manager */}
          <aside className="relative w-[239px] shrink-0 border-r border-[#808080] bg-[#f7f7f7] pt-0.5">
            <div className="mr-0.5 flex h-4 items-center justify-center border-y border-[#c0c0c0]">
              <span className="h-1.5 w-1.5 rounded-full border border-[#909090] bg-[#c8c8c8]" />
            </div>
            <div className="mt-1 mr-0.5 flex h-[26px] border-b border-[#b8b8b8]">
              {panelTabs.map(([l, ic], i) => (
                <button key={l} aria-label={l} className={"-mb-px flex h-[26px] w-10 items-center justify-center border-t border-r border-[#808080] " + (i === 0 ? "bg-[#f7f7f7]" : "border-b bg-[#d4d4d4]")}>{ic}</button>
              ))}
              <button aria-label="更多选项卡" className="ml-auto flex w-4 items-center justify-center">
                <svg width="8" height="12" fill="none" stroke="#777" strokeWidth="2"><path d="m1 1 5 5-5 5" /></svg>
              </button>
            </div>
            <button aria-label="过滤器" className="ml-[3px] flex h-8 w-[232px] items-center border border-[#c0c0c0] pl-0.5">
              <svg width="18" height="20" viewBox="0 0 19 20" fill="none" strokeWidth="1.300" aria-hidden="true">
                <path d="M1 2h17v3l-6.500 6v8l-4-2v-6L1 5z" fill="#f4f4f4" stroke="#444" />
                <path d="M1.500 2h16v3h-16z" fill="#3f87ab" stroke="#1c4a63" />
              </svg>
              <span className="pt-1.5"><Caret /></span>
            </button>
            <button aria-label="折叠面板" className="absolute top-[372px] left-[238px] z-10 flex h-[49px] w-3 items-center border border-l-0 border-[#909090] bg-[#f7f7f7] pl-[3px]">
              <span className="h-[5px] w-[5px] rounded-full border border-[#888]" />
            </button>
          </aside>

          <section className="grid min-w-0 flex-1 content-start">
            <div className="col-start-1 row-start-1 flex h-[30px] items-center justify-center justify-self-center pr-2">
              {viewTools.map((t) => (
                <React.Fragment key={t.label}>
                  <button aria-label={t.label} className="flex w-[26px] justify-center"><Ico>{t.icon}</Ico></button>
                  {t.caret && <button aria-label={t.label + "选项"} className="flex h-5 w-3.5 items-center justify-center"><Caret light /></button>}
                </React.Fragment>
              ))}
            </div>
            <div className="col-start-1 row-start-1 mt-[30px] flex w-[33px] flex-col justify-self-end border-t border-l border-[#808080]">
              {taskTabs.map(([l, ic], i) => (
                <button key={l} aria-label={l} className={"flex items-center justify-center border-b border-[#808080] " + (i === 0 ? "h-[29px] bg-[#f7f7f7]" : "h-[30px] bg-[#d4d4d4]")}>{ic}</button>
              ))}
            </div>
          </section>
        </div>
      </main>

      {/* status bar */}
      <footer className="flex h-[22px] shrink-0 items-center border-t border-[#808080] text-[15px] leading-5">
        <div role="progressbar" aria-label="进度" aria-valuenow={11} className="h-3.5 w-[120px] shrink-0 border border-l-0 border-[#bcbcbc] bg-[#e6e6e6]">
          <div className="h-full w-[13px] bg-[#0bb02b]" />
        </div>
        <span className="whitespace-nowrap">emium 2017 x64 版</span>
        <span className="ml-auto border-l border-[#c8c8c8] pr-1.5 pl-[3px] whitespace-nowrap">大型装配体模式</span>
        <span className="border-l border-[#c8c8c8] pr-1.5 pl-[3px] whitespace-nowrap">在编辑 装配体</span>
        <span className="h-5 w-4 border-x border-[#c8c8c8]" />
        <button className="ml-9 text-[#a6a6a6]">自定义</button>
        <span className="ml-[22px] rotate-180"><Caret light /></span>
        <button aria-label="标签" className="ml-[65px]">
          <svg width="18" height="16" viewBox="0 0 18 16" fill="#eee" stroke="#444" strokeWidth="1.200"><path d="m1.500 5 5-4 10 4-1 5-5 4.500-7-4z" /><path d="m1.500 5 8 5 7-5M9.500 10l1 4" fill="none" /><circle cx="6" cy="4.500" r="1.500" /><path d="m8 7 5-3" /></svg>
        </button>
        <svg width="12" height="12" className="mr-[3px] ml-3" fill="#b4b4b4"><path d="M9 1h2v2H9zM5 5h2v2H5zM9 5h2v2H9zM1 9h2v2H1zM5 9h2v2H5zM9 9h2v2H9z" /></svg>
      </footer>
    </div>
  );
}
